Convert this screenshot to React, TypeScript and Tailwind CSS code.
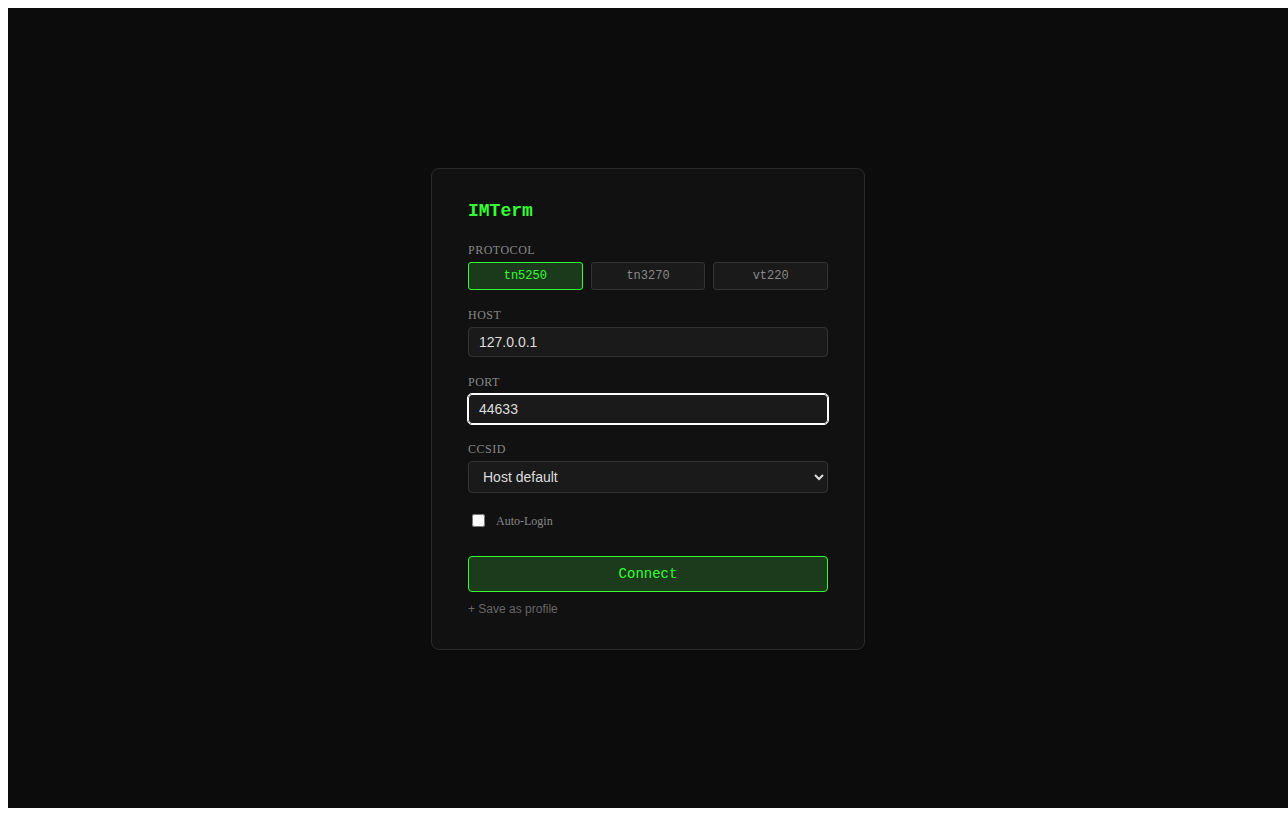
import { useState } from "react";

const protocols = ["tn5250", "tn3270", "vt220"];

function Label({ children }: { children: string }) {
  return (
    <label className="block mb-1 text-[12px] leading-[16px] tracking-[0.5px] uppercase text-[#888] font-['Liberation_Serif',serif]">
      {children}
    </label>
  );
}

export default function App() {
  const [protocol, setProtocol] = useState("tn5250");

  return (
    <div className="min-h-screen bg-white pt-2 pl-2">
      <div className="w-[1280px] h-[800px] bg-[#0c0c0c] flex items-center justify-center">
        <div className="w-[434px] mt-[2px] bg-[#111111] border border-[#2a2a2a] rounded-lg px-9 pt-8 pb-8">
          <h1 className="text-[18px] leading-[20px] font-bold text-[#33ff33] font-['Liberation_Mono',monospace] mb-[21px]">
            IMTerm
          </h1>

          {/* Protocol */}
          <div className="mb-[17px]">
            <Label>Protocol</Label>
            <div className="grid grid-cols-3 gap-2">
              {protocols.map((p) => (
                <button
                  key={p}
                  onClick={() => setProtocol(p)}
                  className={
                    p === protocol
                      ? "h-7 rounded-[3px] border border-[#33ff33] bg-[#1b3a1b] text-[#33ff33] text-[12px] font-['Liberation_Mono',monospace]"
                      : "h-7 rounded-[3px] border border-[#333] bg-[#1a1a1a] text-[#888] text-[12px] font-['Liberation_Mono',monospace]"
                  }
                >
                  {p}
                </button>
              ))}
            </div>
          </div>

          <div className="mb-[17px]">
            <Label>Host</Label>
            <input
              defaultValue="127.0.0.1"
              className="block w-full h-[30px] px-[10px] rounded-[4px] border border-[#333] bg-[#1a1a1a] text-[14px] text-[#ddd] font-['Liberation_Sans',Arial,sans-serif] outline-none"
            />
          </div>

          <div className="mb-[17px]">
            <Label>Port</Label>
            <input
              defaultValue="44633"
              className="block w-full h-[30px] px-[10px] rounded-[4px] border border-white outline outline-1 outline-white bg-[#1a1a1a] text-[14px] text-[#ddd] font-['Liberation_Sans',Arial,sans-serif]"
            />
          </div>

          <div className="mb-[18px]">
            <Label>CCSID</Label>
            <select className="block w-full h-8 px-[10px] rounded-[4px] border border-[#333] bg-[#1a1a1a] text-[14px] text-[#ddd] scheme-dark font-['Liberation_Sans',Arial,sans-serif] outline-none">
              <option>Host default</option>
              <option>37</option>
              <option>273</option>
              <option>500</option>
            </select>
          </div>

          <div className="flex items-center h-[19px] mb-[26px]">
            <input type="checkbox" className="w-[13px] h-[13px] ml-1 mr-[3px]" />
            <span className="ml-2 text-[12px] text-[#888] font-['Liberation_Serif',serif]">
              Auto-Login
            </span>
          </div>

          <button className="block w-full h-9 rounded-[4px] border border-[#33ff33] bg-[#1c3a1c] text-[14px] text-[#33ff33] font-['Liberation_Mono',monospace]">
            Connect
          </button>

          <div className="mt-[9px] text-[12px] leading-[16px] text-[#666] font-['Liberation_Sans',Arial,sans-serif]">
            + Save as profile
          </div>
        </div>
      </div>
    </div>
  );
}
